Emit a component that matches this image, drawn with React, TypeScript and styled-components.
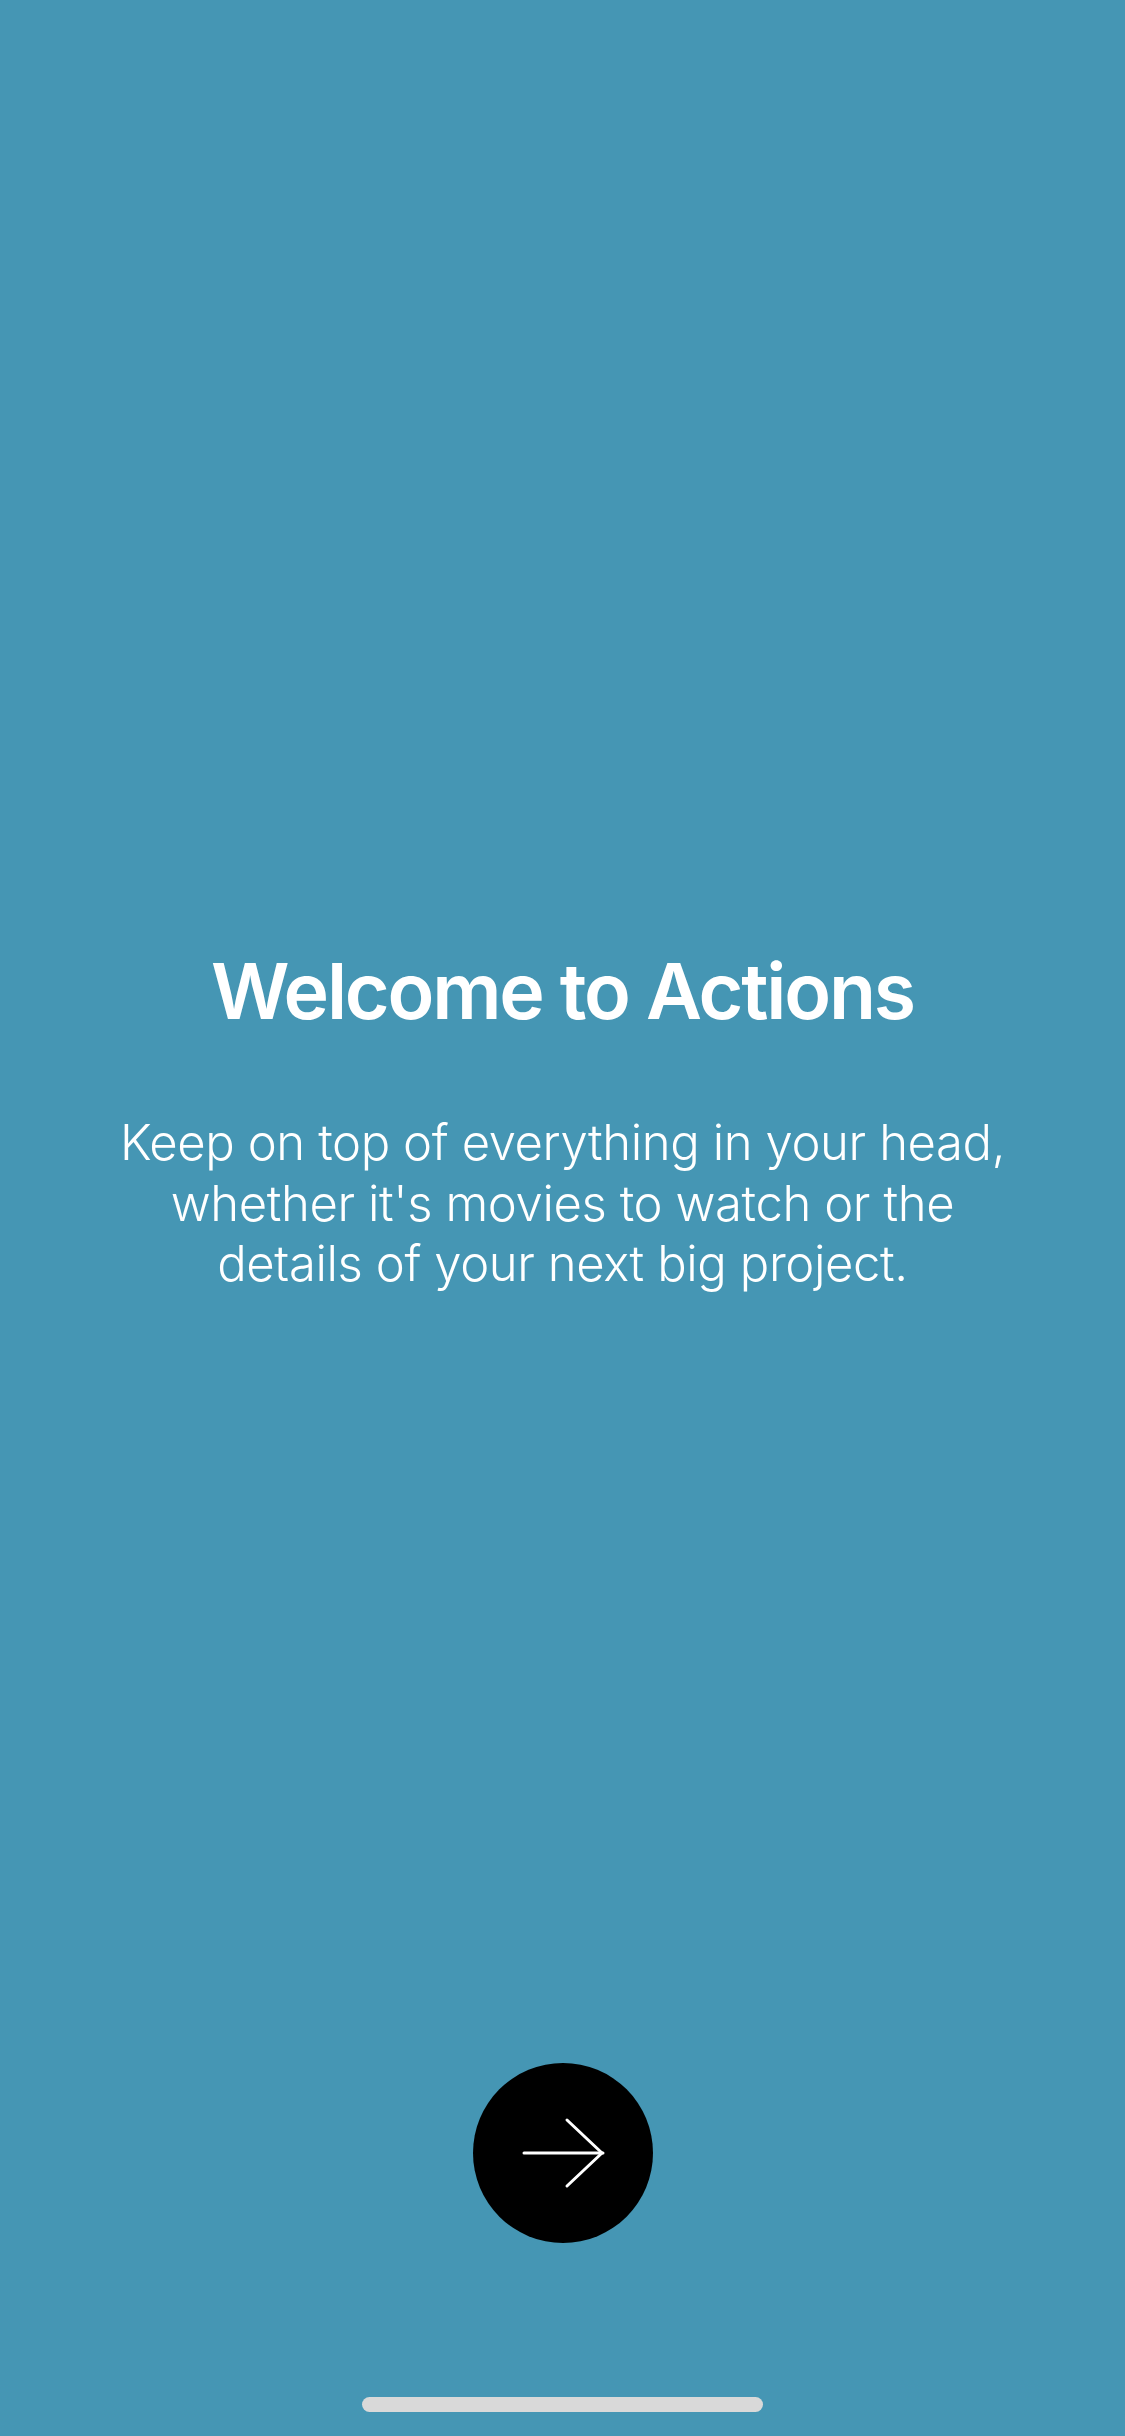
import React from "react";
import styled, { createGlobalStyle } from "styled-components";

const Global = createGlobalStyle`
  html, body { margin: 0; padding: 0; background: #4596B4; }
  * { box-sizing: border-box; }
`;

const Page = styled.div`
  width: 1125px;
  height: 2436px;
  background: #4596B4;
  display: flex;
  flex-direction: column;
  align-items: center;
  font-family: Inter, "Noto Sans", "Liberation Sans", sans-serif;
  color: #ffffff;
  padding-top: 944px;
  padding-bottom: 24px;
`;

const Title = styled.h1`
  margin: 0;
  font-size: 77px;
  line-height: 94px;
  font-weight: 600;
  letter-spacing: -2.2px;
  text-align: center;
`;

const Body = styled.p`
  margin: 75px 0 0;
  font-size: 49px;
  line-height: 60.5px;
  font-weight: 300;
  letter-spacing: -0.4px;
  text-align: center;
`;

const Spacer = styled.div`
  flex: 1;
`;

const NextButton = styled.button`
  width: 180px;
  height: 180px;
  border-radius: 50%;
  border: none;
  background: #000000;
  padding: 0;
  display: flex;
  align-items: center;
  justify-content: center;
  cursor: pointer;
`;

const HomeIndicator = styled.div`
  margin-top: 154px;
  width: 401px;
  height: 15px;
  border-radius: 8px;
  background: #D9D9D9;
`;

export default function App() {
  return (
    <>
      <Global />
      <Page>
        <Title>Welcome to Actions</Title>
        <Body>
          Keep on top of everything in your head,
          <br />
          whether it's movies to watch or the
          <br />
          details of your next big project.
        </Body>
        <Spacer />
        <NextButton aria-label="Next">
          <svg width="180" height="180" viewBox="0 0 180 180">
            <g stroke="#ffffff" strokeWidth="3" fill="none" strokeLinecap="round" strokeLinejoin="round">
              <line x1="51" y1="90" x2="130" y2="90" />
              <polyline points="94,57 129,90 94,123" />
            </g>
          </svg>
        </NextButton>
        <HomeIndicator />
      </Page>
    </>
  );
}
